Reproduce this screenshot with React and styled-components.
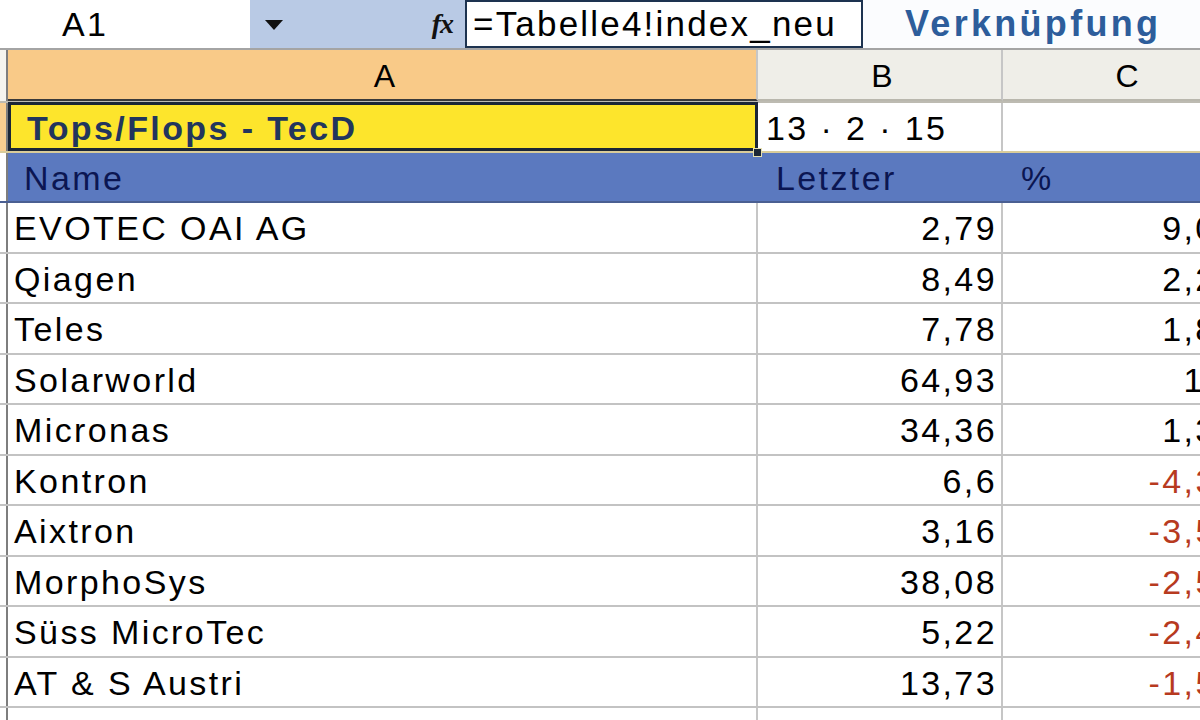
import React from 'react'
import styled, { createGlobalStyle } from 'styled-components'

const Global = createGlobalStyle`
  html, body {
    margin: 0;
    padding: 0;
    background: #ffffff;
    overflow: hidden;
  }
  body {
    width: 1200px;
    height: 720px;
    font-family: "Liberation Sans", Arial, sans-serif;
  }
`

const Sheet = styled.div`
  width: 1200px;
  height: 720px;
  overflow: hidden;
  font-size: 34px;
  letter-spacing: 2.4px;
  color: #000;
`

const FormulaBar = styled.div`
  display: flex;
  align-items: stretch;
  height: 48px;
  border-bottom: 2px solid #a4a4a4;
  background: #fbfcfe;
`

const NameBox = styled.div`
  width: 188px;
  padding-left: 62px;
  display: flex;
  align-items: center;
  background: #ffffff;
`

const DropZone = styled.div`
  width: 215px;
  display: flex;
  align-items: center;
  justify-content: space-between;
  padding: 0 12px 0 15px;
  box-sizing: border-box;
  background: #b9cae5;
`

const Caret = styled.span`
  width: 0;
  height: 0;
  border-left: 9px solid transparent;
  border-right: 9px solid transparent;
  border-top: 10px solid #111;
  margin-top: 2px;
`

const Fx = styled.span`
  font-family: "Liberation Serif", "Times New Roman", serif;
  font-style: italic;
  font-weight: bold;
  font-size: 28px;
  letter-spacing: -1px;
  color: #111;
`

const FormulaInput = styled.div`
  width: 398px;
  box-sizing: border-box;
  border: 2px solid #1d3350;
  background: #fff;
  display: flex;
  align-items: center;
  padding-left: 6px;
  font-size: 35px;
  letter-spacing: 2.2px;
  white-space: nowrap;
  overflow: hidden;
`

const LinkLabel = styled.div`
  margin-left: 42px;
  display: flex;
  align-items: center;
  font-weight: bold;
  font-size: 36px;
  letter-spacing: 3.3px;
  color: #2d5d9b;
`

const Row = styled.div`
  display: flex;
  height: ${(p) => p.h || 50.5}px;
  box-sizing: border-box;
  border-bottom: 2px solid ${(p) => p.line || '#c3c3c3'};
  background: ${(p) => p.bg || '#fff'};
  position: relative;
`

const Strip = styled.div`
  width: 8px;
  flex: none;
  box-sizing: border-box;
  border-right: 2px solid #7e7e7e;
  background: ${(p) => p.bg || '#fff'};
`

const Cell = styled.div`
  flex: none;
  width: ${(p) => p.w}px;
  box-sizing: border-box;
  display: flex;
  align-items: center;
  justify-content: ${(p) => (p.right ? 'flex-end' : p.center ? 'center' : 'flex-start')};
  padding: 3px ${(p) => (p.right ? p.pr || 8 : 0)}px 0 ${(p) => p.pl || 6}px;
  border-right: 2px solid ${(p) => p.line || '#c6c6c6'};
  background: ${(p) => p.bg || 'transparent'};
  color: ${(p) => p.color || '#000'};
  font-weight: ${(p) => (p.bold ? 'bold' : 'normal')};
  white-space: nowrap;
  overflow: hidden;
`

const ColHead = styled(Cell)`
  font-size: 32px;
  letter-spacing: 1px;
  border-bottom: 2px solid ${(p) => p.under || '#b9b7ad'};
`

const Selected = styled(Cell)`
  border: 3px solid #1b2636;
  margin-top: -1px;
  height: calc(100% + 1px);
`

const Handle = styled.span`
  position: absolute;
  left: 753px;
  bottom: -6px;
  width: 7px;
  height: 7px;
  background: #1b2636;
  border: 1px solid #e6e0b0;
  z-index: 2;
`

const W = { a: 750, b: 245, c: 245 }

const rows = [
  ['EVOTEC OAI AG', '2,79', '9,09'],
  ['Qiagen', '8,49', '2,27'],
  ['Teles', '7,78', '1,83'],
  ['Solarworld', '64,93', '1,5'],
  ['Micronas', '34,36', '1,35'],
  ['Kontron', '6,6', '-4,35'],
  ['Aixtron', '3,16', '-3,51'],
  ['MorphoSys', '38,08', '-2,51'],
  ['Süss MicroTec', '5,22', '-2,43'],
  ['AT & S Austri', '13,73', '-1,51'],
  ['', '', ''],
]

export default function App() {
  return (
    <Sheet>
      <Global />
      <FormulaBar>
        <NameBox>A1</NameBox>
        <DropZone>
          <Caret />
          <Fx>fx</Fx>
        </DropZone>
        <FormulaInput>=Tabelle4!index_neu</FormulaInput>
        <LinkLabel>Verknüpfung</LinkLabel>
      </FormulaBar>

      <Row h={53} line="#bdbbb2" bg="#efeee8">
        <Strip bg="#f5f4ef" />
        <ColHead w={W.a} center bg="#f9ca88" under="#3a3a3a">A</ColHead>
        <ColHead w={W.b} center>B</ColHead>
        <ColHead w={W.c} center>C</ColHead>
      </Row>

      <Row h={50} line="#d9cc9a">
        <Strip bg="#f9cf90" />
        <Selected w={W.a} bold bg="#fde52c" color="#22355d" pl={16}>
          Tops/Flops - TecD
        </Selected>
        <Cell w={W.b} pl={8}>13 · 2 · 15</Cell>
        <Cell w={W.c} />
        <Handle />
      </Row>

      <Row h={50} line="#4a5f92" bg="#5b79bf">
        <Strip />
        <Cell w={W.a} pl={16} color="#0b1652" line="#5b79bf">Name</Cell>
        <Cell w={W.b} pl={18} color="#0b1652" line="#5b79bf">Letzter</Cell>
        <Cell w={W.c} pl={18} color="#0b1652" line="#5b79bf">%</Cell>
      </Row>

      {rows.map(([name, last, pct], i) => (
        <Row key={i}>
          <Strip />
          <Cell w={W.a} pl={6}>{name}</Cell>
          <Cell w={W.b} right pr={4}>{last}</Cell>
          <Cell w={W.c} right color={pct.startsWith('-') ? '#b73a1f' : '#000'}>{pct}</Cell>
        </Row>
      ))}
    </Sheet>
  )
}
